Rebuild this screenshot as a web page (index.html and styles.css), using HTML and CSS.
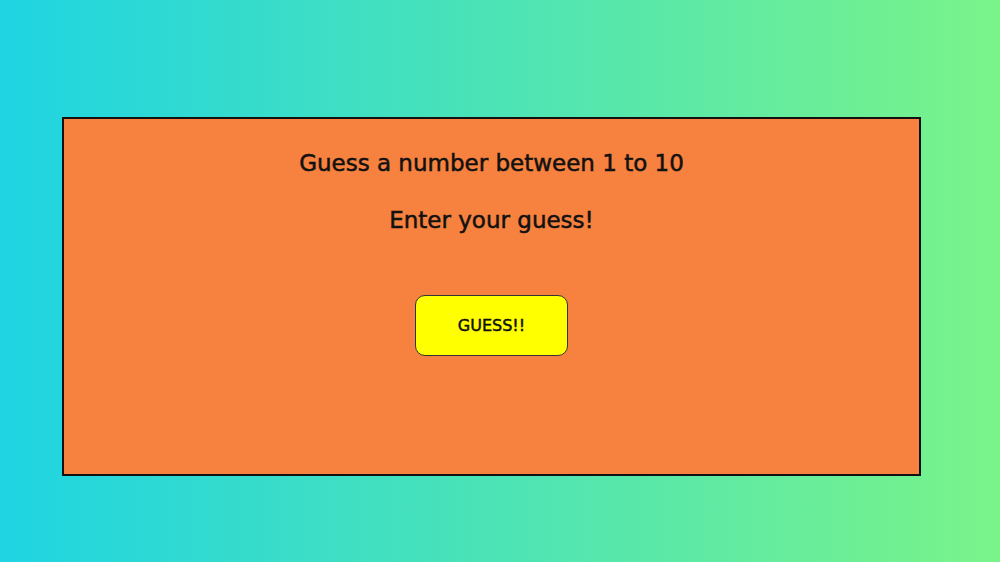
FILE: index.html
```html
<!DOCTYPE html>
<html>
<head>
<meta charset="utf-8">
<link rel="stylesheet" href="styles.css">
</head>
<body>
<main class="page">
  <section class="game">
    <h1 class="title">Guess a number between 1 to 10</h1>
    <p class="prompt">Enter your guess!</p>
    <button class="guess-btn">GUESS!!</button>
  </section>
</main>
</body>
</html>
```
FILE: styles.css
```css
html, body {
  margin: 0;
  padding: 0;
  height: 100%;
}
body {
  background: linear-gradient(to right, #1fd4e2, #7af389);
  font-family: "DejaVu Sans", Verdana, sans-serif;
  color: #111;
}
.page {
  box-sizing: border-box;
  height: 562px;
  padding: 117px 79px 0 62px;
}
.game {
  box-sizing: border-box;
  width: 859px;
  height: 359px;
  background: #f7813e;
  border: 2px solid #111;
  display: flex;
  flex-direction: column;
  align-items: center;
  padding-top: 30px;
}
.title {
  margin: 0;
  font-size: 23px;
  font-weight: normal;
  line-height: 28px;
  -webkit-text-stroke: 0.5px #111;
}
.prompt {
  margin: 29px 0 0;
  font-size: 23px;
  line-height: 28px;
  -webkit-text-stroke: 0.5px #111;
}
.guess-btn {
  margin-top: 61px;
  width: 153px;
  height: 61px;
  background: #ffff00;
  border: 1px solid #333;
  border-radius: 10px;
  font-family: "DejaVu Sans", Verdana, sans-serif;
  font-size: 16px;
  color: #111;
  padding: 0;
  -webkit-text-stroke: 0.5px #111;
}
```
